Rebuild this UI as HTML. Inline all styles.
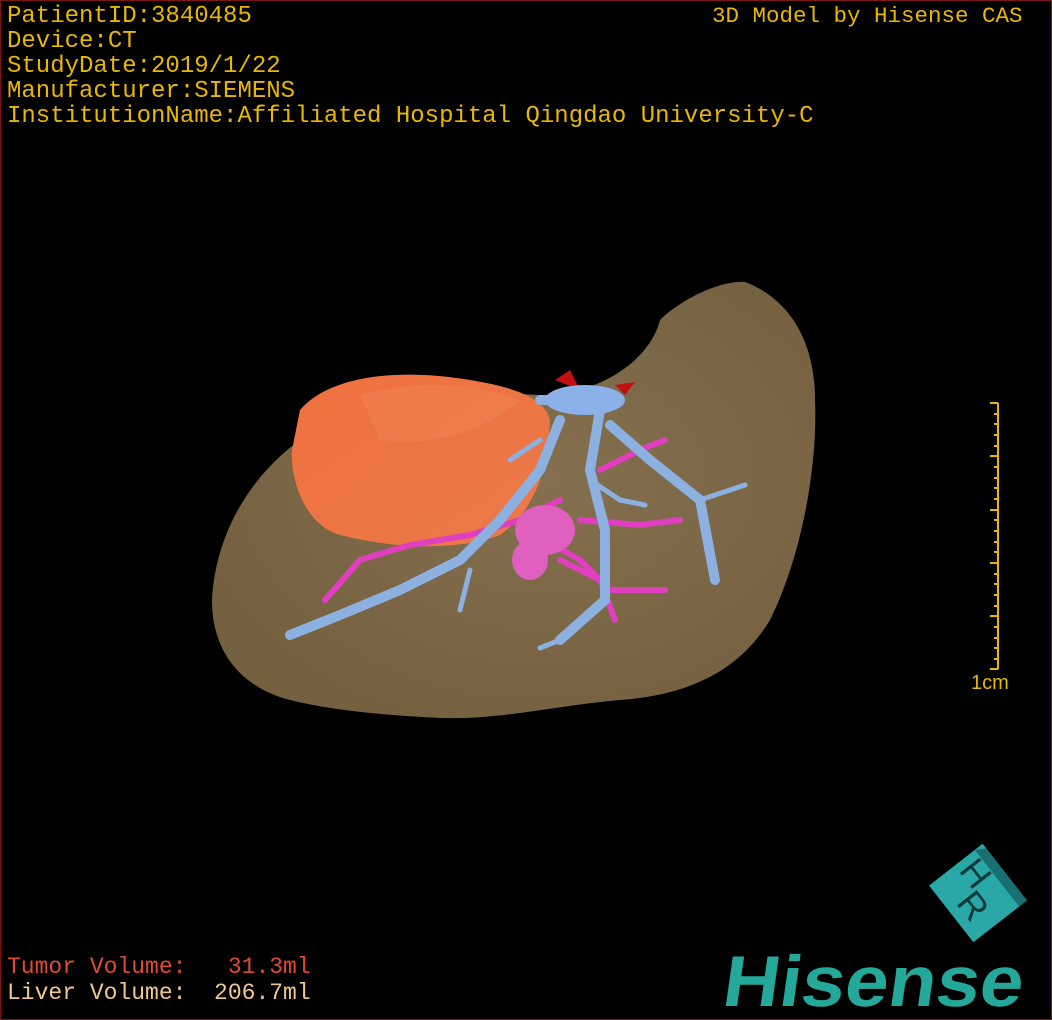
<!DOCTYPE html>
<html><head><style>
body{margin:0;background:#000;width:1052px;height:1020px;overflow:hidden;position:relative;font-family:"Liberation Mono",monospace}
.frame{position:absolute;left:0;top:0;width:1050px;height:1018px;border:1px solid #7a1518}
.t{position:absolute;white-space:pre;font-size:24px;line-height:25px;color:#e8b800}
</style></head><body>
<svg width="1052" height="1020" style="position:absolute;left:0;top:0">
<defs>
<radialGradient id="lg" cx="0.55" cy="0.45" r="0.6"><stop offset="0" stop-color="#84704e"/><stop offset="1" stop-color="#756040"/></radialGradient>
<linearGradient id="tg" x1="0" y1="0" x2="1" y2="1"><stop offset="0" stop-color="#f07040"/><stop offset="1" stop-color="#ea7a48"/></linearGradient>
</defs>
<path d="M212,600 C215,540 245,480 300,440 C360,400 450,390 540,395 C600,395 650,360 660,320 C680,300 720,280 745,282 C780,295 815,330 815,400 C818,470 800,560 770,620 C740,670 690,695 620,700 C560,705 500,720 440,718 C380,715 330,710 290,700 C250,690 212,660 212,600 Z" fill="url(#lg)"/>
<path d="M300,410 C330,375 400,368 470,380 C520,388 545,400 550,420 C548,470 535,510 500,535 C460,550 400,550 340,535 C305,525 290,480 292,450 Z" fill="url(#tg)"/>
<path d="M360,395 C420,378 480,385 520,400 C500,420 440,450 380,440 Z" fill="#f08050" opacity="0.6"/>
<path d="M555,380 L570,370 L580,390 Z M615,385 L635,382 L625,395 Z" fill="#c01010"/>
<g stroke="#e040c0" stroke-width="6" fill="none" stroke-linecap="round">
<path d="M560,500 L520,520 L470,535 L410,545 L360,560 L325,600"/>
<path d="M545,540 L580,560 L610,590 L665,590"/>
<path d="M600,470 L640,450 L665,440"/>
<path d="M580,520 L640,525 L680,520"/>
<path d="M560,560 L600,580 L615,620"/>
</g>
<g fill="#e060c0"><ellipse cx="545" cy="530" rx="30" ry="25"/><ellipse cx="530" cy="560" rx="18" ry="20"/></g>
<g stroke="#8cb0e0" stroke-width="10" fill="none" stroke-linecap="round">
<path d="M560,420 L540,470 L500,520 L460,560 L400,590 L340,615 L290,635"/>
<path d="M600,410 L590,470 L605,530 L605,600 L560,640"/>
<path d="M610,425 L650,460 L700,500 L715,580"/>
<path d="M540,400 L610,400"/>
</g>
<g stroke="#8cb0e0" stroke-width="5" fill="none" stroke-linecap="round">
<path d="M700,500 L745,485"/><path d="M540,440 L510,460"/><path d="M470,570 L460,610"/><path d="M560,640 L540,648"/><path d="M590,480 L620,500 L645,505"/>
</g>
<ellipse cx="585" cy="400" rx="40" ry="15" fill="#8cb0e8"/>
<g stroke="#e8b800" stroke-width="2">
<line x1="998" y1="403" x2="998" y2="669"/>
<line x1="990" y1="403" x2="998" y2="403"/><line x1="994" y1="414" x2="998" y2="414"/><line x1="994" y1="424" x2="998" y2="424"/><line x1="994" y1="435" x2="998" y2="435"/><line x1="994" y1="446" x2="998" y2="446"/><line x1="990" y1="456" x2="998" y2="456"/><line x1="994" y1="467" x2="998" y2="467"/><line x1="994" y1="478" x2="998" y2="478"/><line x1="994" y1="488" x2="998" y2="488"/><line x1="994" y1="499" x2="998" y2="499"/><line x1="990" y1="510" x2="998" y2="510"/><line x1="994" y1="520" x2="998" y2="520"/><line x1="994" y1="531" x2="998" y2="531"/><line x1="994" y1="542" x2="998" y2="542"/><line x1="994" y1="552" x2="998" y2="552"/><line x1="990" y1="563" x2="998" y2="563"/><line x1="994" y1="574" x2="998" y2="574"/><line x1="994" y1="584" x2="998" y2="584"/><line x1="994" y1="595" x2="998" y2="595"/><line x1="994" y1="606" x2="998" y2="606"/><line x1="990" y1="616" x2="998" y2="616"/><line x1="994" y1="627" x2="998" y2="627"/><line x1="994" y1="638" x2="998" y2="638"/><line x1="994" y1="648" x2="998" y2="648"/><line x1="994" y1="659" x2="998" y2="659"/><line x1="990" y1="669" x2="998" y2="669"/>
</g>
<text x="971" y="689" font-family="Liberation Sans" font-size="20" fill="#e8b800">1cm</text>
<g transform="translate(978,893) rotate(-38)">
<rect x="-34" y="-36" width="68" height="72" fill="#2aa8a8"/>
<path d="M24,-36 L34,-30 L34,36 L24,36 Z" fill="#1a7070"/>
<text x="-26" y="24" font-family="Liberation Sans" font-size="36" fill="#0b3a3a" transform="rotate(90 -10 10)">R</text>
<text x="-2" y="-6" font-family="Liberation Sans" font-size="36" fill="#0b3a3a" transform="rotate(90 10 -18)">H</text>
</g>
<text x="722" y="1006" font-family="Liberation Sans" font-weight="bold" font-size="72" fill="#24a89a" textLength="300" lengthAdjust="spacingAndGlyphs" transform="skewX(-8) translate(140,0)">Hisense</text>
</svg>
<div class="frame"></div>
<div class="t" style="left:7px;top:4px">PatientID:3840485
Device:CT
StudyDate:2019/1/22
Manufacturer:SIEMENS
InstitutionName:Affiliated Hospital Qingdao University-C</div>
<div class="t" style="left:712px;top:4px;font-size:22.5px">3D Model by Hisense CAS</div>
<div class="t" style="left:7px;top:954px;font-size:23px;line-height:26px;color:#e04a30">Tumor Volume:   31.3ml</div>
<div class="t" style="left:7px;top:980px;font-size:23px;line-height:26px;color:#f0c890">Liver Volume:  206.7ml</div>
</body></html>
